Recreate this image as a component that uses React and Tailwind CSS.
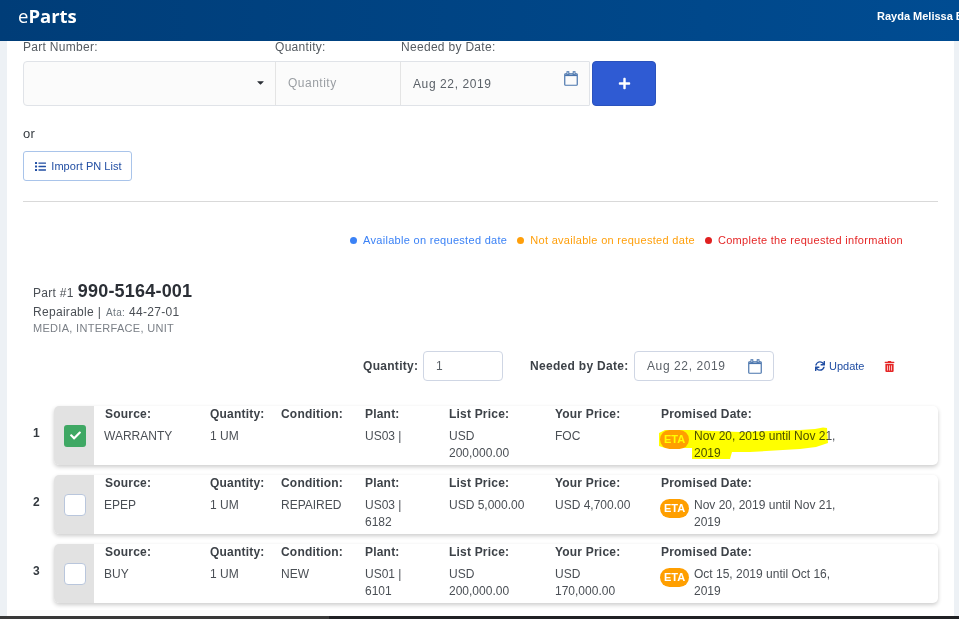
import React from "react";
import { FaCaretDown, FaCheck, FaList, FaPlus, FaSync, FaTrashAlt } from "react-icons/fa";

const rows = [
  { n: "1", checked: true, source: "WARRANTY", cond: "", plant: "US03 |", list: "USD 200,000.00", your: "FOC", date: "Nov 20, 2019 until Nov 21, 2019" },
  { n: "2", source: "EPEP", cond: "REPAIRED", plant: "US03 | 6182", list: "USD 5,000.00", your: "USD 4,700.00", date: "Nov 20, 2019 until Nov 21, 2019" },
  { n: "3", source: "BUY", cond: "NEW", plant: "US01 | 6101", list: "USD 200,000.00", your: "USD 170,000.00", date: "Oct 15, 2019 until Oct 16, 2019" },
];

function CalendarIcon({ className = "" }) {
  return (
    <svg className={className} width="14" height="15" viewBox="0 0 14 15" fill="none" stroke="#4a75ad">
      <rect x="0.75" y="2.75" width="12.5" height="11.5" rx="0.8" strokeWidth="1.2" />
      <path d="M1 4.3H13" strokeWidth="1.6" />
      <rect x="3" y="0.7" width="1.8" height="3" fill="#ffffff" strokeWidth="1" />
      <rect x="9.2" y="0.7" width="1.8" height="3" fill="#ffffff" strokeWidth="1" />
    </svg>
  );
}

function Col({ label, children, className = "", labelClass = "" }) {
  return (
    <div className={className}>
      <div className={`h-[14px] leading-[14px] font-bold tracking-[0.2px] text-[#3d4248] whitespace-nowrap ${labelClass}`}>{label}</div>
      <div className="mt-[7px] leading-[17px] text-[#4a4f55]">{children}</div>
    </div>
  );
}

function Row({ r }) {
  return (
    <div className="flex items-center">
      <div className="w-[21px] pb-[5px] font-bold text-[#343a40] text-[12px]">{r.n}</div>
      <div className="flex h-[59px] w-[884px] bg-white rounded-[5px] shadow-[0_2px_4px_rgba(0,0,0,0.2)] overflow-hidden">
        <div className="w-[40px] bg-[#e2e2e2] flex items-center justify-center shrink-0 pl-[2px]">
          {r.checked ? (
            <div className="w-[22px] h-[22px] rounded-[3px] bg-[#3fa864] flex items-center justify-center text-white">
              <FaCheck className="text-[11px]" />
            </div>
          ) : (
            <div className="w-[22px] h-[22px] rounded-[4px] bg-white border border-[#b9c6dc]" />
          )}
        </div>
        <div className="flex-1 grid grid-cols-[106px_71px_84px_84px_106px_106px_1fr] pl-[10px] pt-[1px] text-[12px] tracking-normal">
          <Col label="Source:" labelClass="pl-[1px]">{r.source}</Col>
          <Col label="Quantity:">1 UM</Col>
          <Col label="Condition:">{r.cond}</Col>
          <Col label="Plant:" className="pr-[30px]">{r.plant}</Col>
          <Col label="List Price:" className="pr-[20px]">{r.list}</Col>
          <Col label="Your Price:" className="pr-[20px]">{r.your}</Col>
          <div>
            <div className="h-[14px] leading-[14px] font-bold tracking-[0.2px] text-[#3d4248]">Promised Date:</div>
            <div className="mt-[7px] flex items-start">
              <span className="mt-[2px] -ml-[1px] w-[29px] h-[19px] shrink-0 rounded-full bg-[#ff9f00] text-white font-bold text-[11px] leading-[19px] text-center tracking-normal">ETA</span>
              <span className="ml-[5px] w-[145px] leading-[17px] text-[#4a4f55]">{r.date}</span>
            </div>
          </div>
        </div>
      </div>
    </div>
  );
}

export default function App() {
  return (
    <div className="relative h-[619px] w-[959px] overflow-hidden bg-[#edf1f5] flex flex-col [font-family:'Liberation_Sans',sans-serif] text-[12px] tracking-[0.3px]">
      <header className="h-[41px] shrink-0 flex items-start justify-between bg-gradient-to-r from-[#003d78] to-[#004c92] pl-[18px] text-white">
        <div className="mt-[3px] text-[18.5px] leading-[26px] tracking-normal [font-family:'Open_Sans',sans-serif]">
          <span className="font-normal">e</span><span className="font-bold">Parts</span>
        </div>
        <div className="mt-[10px] w-[82px] overflow-hidden whitespace-nowrap text-[11px] leading-[13px] font-bold tracking-normal">Rayda Melissa B</div>
      </header>

      <main className="flex-1 mx-[7px] w-[947px] bg-white px-[16px] min-h-0">
        <div className="flex h-[20px] items-start leading-[12px] text-[#555b61]">
          <div className="w-[252px]">Part Number:</div>
          <div className="w-[126px]">Quantity:</div>
          <div>Needed by Date:</div>
        </div>
        <div className="flex">
          <div className="flex h-[45px] w-[567px] border border-[#e0e3e8] bg-[#fbfbfb] rounded-l-[4px] rounded-r-[1px]">
            <div className="w-[252px] border-r border-[#e4e4e4] flex items-center justify-end pr-[9px] pb-[3px] text-[#2b2f36] text-[11px]"><FaCaretDown /></div>
            <div className="w-[125px] border-r border-[#e4e4e4] flex items-center pl-[12px] pb-[2px] text-[#9a9ea3] tracking-[0.5px]">Quantity</div>
            <div className="flex-1 flex items-start pl-[12px] pr-[11px] justify-between text-[#5b6168] tracking-[0.6px]">
              <span className="mt-[13px]">Aug 22, 2019</span>
              <CalendarIcon className="mt-[9px]" />
            </div>
          </div>
          <button className="ml-[2px] w-[64px] h-[45px] bg-[#2f5bd3] rounded-[4px] border border-[#2a52bd] flex items-center justify-center text-white"><FaPlus className="text-[13px]" /></button>
        </div>

        <div className="mt-[20px] text-[13px] leading-[16px] text-[#343a40]">or</div>
        <button className="mt-[9px] h-[30px] w-[109px] rounded-[3px] border border-[#a9c4ea] bg-white flex items-center justify-center gap-[5px] pl-[2px] text-[#214ea3] text-[11px] tracking-[0.05px]"><FaList className="text-[11px]" />Import PN List</button>
        <div className="mt-[20px] border-t border-[#d9d9d9]"></div>

        <div className="mt-[31px] flex justify-end pr-[35px] text-[11px] leading-[14px] gap-[10px]">
          <span className="flex items-center gap-[6px] text-[#3b82f6]"><i className="w-[7px] h-[7px] rounded-full bg-[#3b82f6]" />Available on requested date</span>
          <span className="flex items-center gap-[6px] text-[#ff9f0a]"><i className="w-[7px] h-[7px] rounded-full bg-[#ff9f0a]" />Not available on requested date</span>
          <span className="flex items-center gap-[6px] text-[#e52727]"><i className="w-[7px] h-[7px] rounded-full bg-[#e02020]" />Complete the requested information</span>
        </div>

        <div className="mt-[34px] ml-[10px]">
          <div className="leading-[20px] text-[#4a4f55] flex items-baseline gap-[4px]">Part #1 <span className="text-[18px] font-bold tracking-[0.2px] text-[#2b2f36]">990-5164-001</span></div>
          <div className="mt-[1px] leading-[17px] text-[#4a4f55] flex items-baseline gap-[4px]">Repairable | <span className="text-[10px] ml-[1px] text-[#6c757d]">Ata:</span> 44-27-01</div>
          <div className="text-[11px] leading-[14px] text-[#7a7f86]">MEDIA, INTERFACE, UNIT</div>
        </div>

        <div className="mt-[16px] flex items-center">
          <span className="ml-[340px] w-[60px] font-bold text-[#3d4248]">Quantity:</span>
          <div className="w-[80px] h-[30px] rounded-[4px] border border-[#cfd6e4] flex items-center pl-[12px] text-[#5b6168]">1</div>
          <span className="ml-[27px] w-[104px] font-bold text-[#3d4248]">Needed by Date:</span>
          <div className="w-[140px] h-[30px] rounded-[4px] border border-[#cfd6e4] flex items-center justify-between pl-[12px] pr-[11px] text-[#5b6168] tracking-[0.6px]">Aug 22, 2019<CalendarIcon /></div>
          <span className="ml-[41px] flex items-center gap-[4px] text-[#214ea3] text-[11px] tracking-normal"><FaSync className="text-[10px]" />Update</span>
          <FaTrashAlt className="ml-[20px] text-[11px] text-[#e52727]" />
        </div>

        <div className="mt-[25px] flex flex-col gap-[10px] ml-[10px]">
          <Row r={rows[0]} />
          <Row r={rows[1]} />
          <Row r={rows[2]} />
        </div>
      </main>

      <div className="h-[3px] shrink-0 flex">
        <div className="w-[329px] bg-[#3a3a3a]"></div>
        <div className="flex-1 bg-[#202124]"></div>
      </div>

      <svg className="absolute inset-0 w-[959px] h-[619px] pointer-events-none mix-blend-multiply" viewBox="0 0 959 619">
        <path d="M659 433 L665 430 L692 430 L712 431 L740 432 L770 431 L800 430 L815 429 L823 427.5 L827 428 L828 443 L816 447 L800 449 L783 450 L750 452 L732 452 L730 459 L692 459 L692 448 L665 448 L659 446 Z" fill="#ffff00" />
      </svg>
    </div>
  );
}
